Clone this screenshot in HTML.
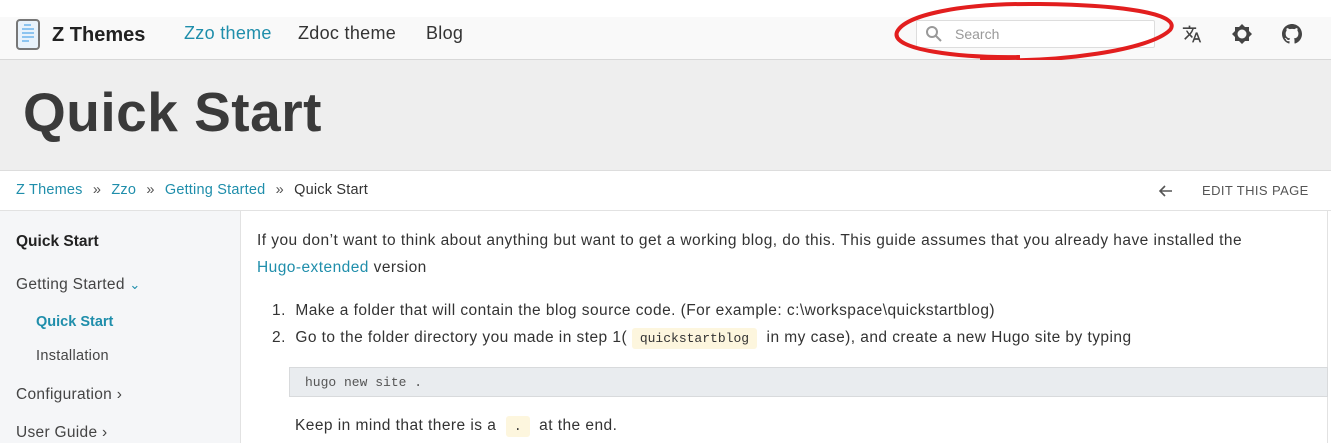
<!DOCTYPE html>
<html><head><meta charset="utf-8"><style>
*{margin:0;padding:0;box-sizing:border-box}
body{width:1331px;height:443px;overflow:hidden;background:#fff;font-family:"Liberation Sans",sans-serif;color:#333;position:relative}
.hdr{position:absolute;top:17px;left:0;width:1331px;height:43px;background:#f9f9f9;border-bottom:1px solid #d8d8d8}
.abs{position:absolute;white-space:nowrap}
.title{position:absolute;top:60px;left:0;width:1331px;height:111px;background:#eeeeee;border-bottom:1px solid #ddd}
.bc{position:absolute;top:171px;left:0;width:1331px;height:40px;background:#fff;border-bottom:1px solid #e2e2e2}
.side{position:absolute;top:211px;left:0;width:241px;height:232px;background:#f5f6f8;border-right:1px solid #e2e2e2}
a{color:#1f8eab;text-decoration:none}
.t{font-size:15.5px;letter-spacing:0.45px;color:#333}
code{font-family:"Liberation Mono",monospace;font-size:13px;background:#fdf6de;padding:3px 8px;border-radius:3px;color:#333;letter-spacing:0}
</style></head><body>
<div class="hdr"></div>
<svg class="abs" style="left:16px;top:19px" width="24" height="31" viewBox="0 0 24 31"><rect x="1" y="1" width="22" height="29" rx="3" fill="#e8f2fb" stroke="#777" stroke-width="2"/><g stroke="#8cc4f0" stroke-width="2"><line x1="8" y1="6" x2="15" y2="6"/><line x1="6" y1="10" x2="18" y2="10"/><line x1="6" y1="14" x2="18" y2="14"/><line x1="6" y1="18" x2="18" y2="18"/><line x1="6" y1="22" x2="13" y2="22"/></g></svg>
<div class="abs" style="left:52px;top:24px;font-size:20px;font-weight:bold;color:#222">Z Themes</div>
<div class="abs" style="left:184px;top:23px;font-size:18px;color:#1f8eab;letter-spacing:0.3px">Zzo theme</div>
<div class="abs" style="left:298px;top:23px;font-size:18px;color:#333;letter-spacing:0.3px">Zdoc theme</div>
<div class="abs" style="left:426px;top:23px;font-size:18px;color:#333;letter-spacing:0.3px">Blog</div>
<div class="abs" style="left:916px;top:20px;width:239px;height:28px;background:#fff;border:1px solid #ddd;border-radius:2px"></div>
<svg class="abs" style="left:925px;top:25px" width="18" height="18" viewBox="0 0 18 18"><circle cx="7" cy="7" r="5" fill="none" stroke="#999" stroke-width="2"/><line x1="11" y1="11" x2="16" y2="16" stroke="#999" stroke-width="2"/></svg>
<div class="abs" style="left:955px;top:26px;font-size:14px;color:#999">Search</div>
<svg class="abs" style="left:1182px;top:24px" width="20" height="20" viewBox="0 0 24 24"><path fill="#444" d="M12.87 15.07l-2.54-2.51.03-.03A17.52 17.52 0 0014.07 6H17V4h-7V2H8v2H1v2h11.17C11.5 7.92 10.44 9.75 9 11.35 8.07 10.32 7.3 9.19 6.69 8h-2c.73 1.630 1.73 3.17 2.98 4.56l-5.09 5.02L4 19l5-5 3.11 3.11.76-2.04zM18.5 10h-2L12 22h2l1.12-3h4.750L21 22h2l-4.5-12zm-2.62 7l1.62-4.33L19.12 17h-3.24z"/></svg>
<svg class="abs" style="left:1231px;top:23px" width="22" height="22" viewBox="0 0 22 22"><path fill="#444" d="M11 1l3 3h4v4l3 3-3 3v4h-4l-3 3-3-3H4v-4l-3-3 3-3V4h4z"/><circle cx="11" cy="11" r="4.5" fill="#f9f9f9"/></svg>
<svg class="abs" style="left:1282px;top:24px" width="20" height="20" viewBox="0 0 16 16"><path fill="#444" d="M8 0C3.58 0 0 3.58 0 8c0 3.54 2.29 6.530 5.470 7.59.4.07.55-.17.55-.38 0-.19-.01-.82-.01-1.49-2.01.37-2.53-.49-2.69-.94-.09-.23-.48-.94-.82-1.13-.28-.15-.68-.52-.01-.53.63-.01 1.08.58 1.23.82.72 1.21 1.87.87 2.33.66.07-.52.28-.87.51-1.07-1.78-.2-3.64-.89-3.64-3.950 0-.87.31-1.59.82-2.15-.08-.2-.36-1.02.08-2.12 0 0 .67-.21 2.2.82.64-.18 1.32-.27 2-.27.68 0 1.36.09 2 .27 1.53-1.04 2.2-.82 2.2-.82.44 1.1.16 1.92.08 2.12.51.56.82 1.27.82 2.15 0 3.07-1.87 3.75-3.65 3.95.29.25.54.73.54 1.48 0 1.07-.01 1.93-.01 2.2 0 .21.15.46.55.38A8.013 8.013 0 0016 8c0-4.42-3.58-8-8-8z"/></svg>
<svg class="abs" style="left:0;top:0" width="1331" height="70"><path d="M980 60 C1060 63 1150 50 1170 30 C1182 15 1130 5 1040 4 C960 3 905 15 897 32 C890 50 960 58 1020 57" fill="none" stroke="#e21e1e" stroke-width="4"/></svg>
<div class="title"></div>
<div class="abs" style="left:23px;top:80px;font-size:55px;font-weight:bold;color:#3a3a3a;letter-spacing:0.5px">Quick Start</div>
<div class="bc"></div>
<div class="abs" style="left:16px;top:182px;font-size:14.5px;color:#1f8eab;letter-spacing:0.2px">Z Themes <span style="color:#555;margin:0 6px">»</span> Zzo <span style="color:#555;margin:0 6px">»</span> Getting Started <span style="color:#555;margin:0 6px">»</span> <span style="color:#333">Quick Start</span></div>
<svg class="abs" style="left:1158px;top:183px" width="16" height="16" viewBox="0 0 16 16"><path d="M14 8H2M7 3L2 8l5 5" fill="none" stroke="#555" stroke-width="1.6"/></svg>
<div class="abs" style="left:1202px;top:183px;font-size:13px;color:#555;letter-spacing:0.4px">EDIT THIS PAGE</div>
<div class="side"></div>
<div class="abs" style="left:16px;top:233px;font-size:15.5px;font-weight:bold;color:#222">Quick Start</div>
<div class="abs" style="left:16px;top:276px;font-size:15.5px;color:#444;letter-spacing:0.3px">Getting Started <span style="color:#1f8eab;font-size:13px">&#8964;</span></div>
<div class="abs" style="left:36px;top:314px;font-size:14.5px;font-weight:bold;color:#1f8eab">Quick Start</div>
<div class="abs" style="left:36px;top:348px;font-size:14.5px;color:#444;letter-spacing:0.3px">Installation</div>
<div class="abs" style="left:16px;top:386px;font-size:15.5px;color:#444;letter-spacing:0.3px">Configuration ›</div>
<div class="abs" style="left:16px;top:424px;font-size:15.5px;color:#444;letter-spacing:0.3px">User Guide ›</div>
<div class="abs" style="left:1327px;top:211px;width:1px;height:232px;background:#e2e2e2"></div>
<div class="abs t" style="left:257px;top:232px">If you don’t want to think about anything but want to get a working blog, do this. This guide assumes that you already have installed the</div>
<div class="abs t" style="left:257px;top:259px"><a>Hugo-extended</a> version</div>
<div class="abs t" style="left:272px;top:302px">1.&nbsp;&nbsp;Make a folder that will contain the blog source code. (For example: c:\workspace\quickstartblog)</div>
<div class="abs t" style="left:272px;top:329px">2.&nbsp;&nbsp;Go to the folder directory you made in step 1( <code>quickstartblog</code>&nbsp; in my case), and create a new Hugo site by typing</div>
<div class="abs" style="left:289px;top:367px;width:1039px;height:30px;background:#e9ecef;border:1px solid #d8dadc"></div>
<div class="abs" style="left:305px;top:375px;font-family:'Liberation Mono',monospace;font-size:13px;color:#555">hugo new site .</div>
<div class="abs t" style="left:295px;top:417px">Keep in mind that there is a &nbsp;<code>.</code>&nbsp; at the end.</div>
</body></html>
